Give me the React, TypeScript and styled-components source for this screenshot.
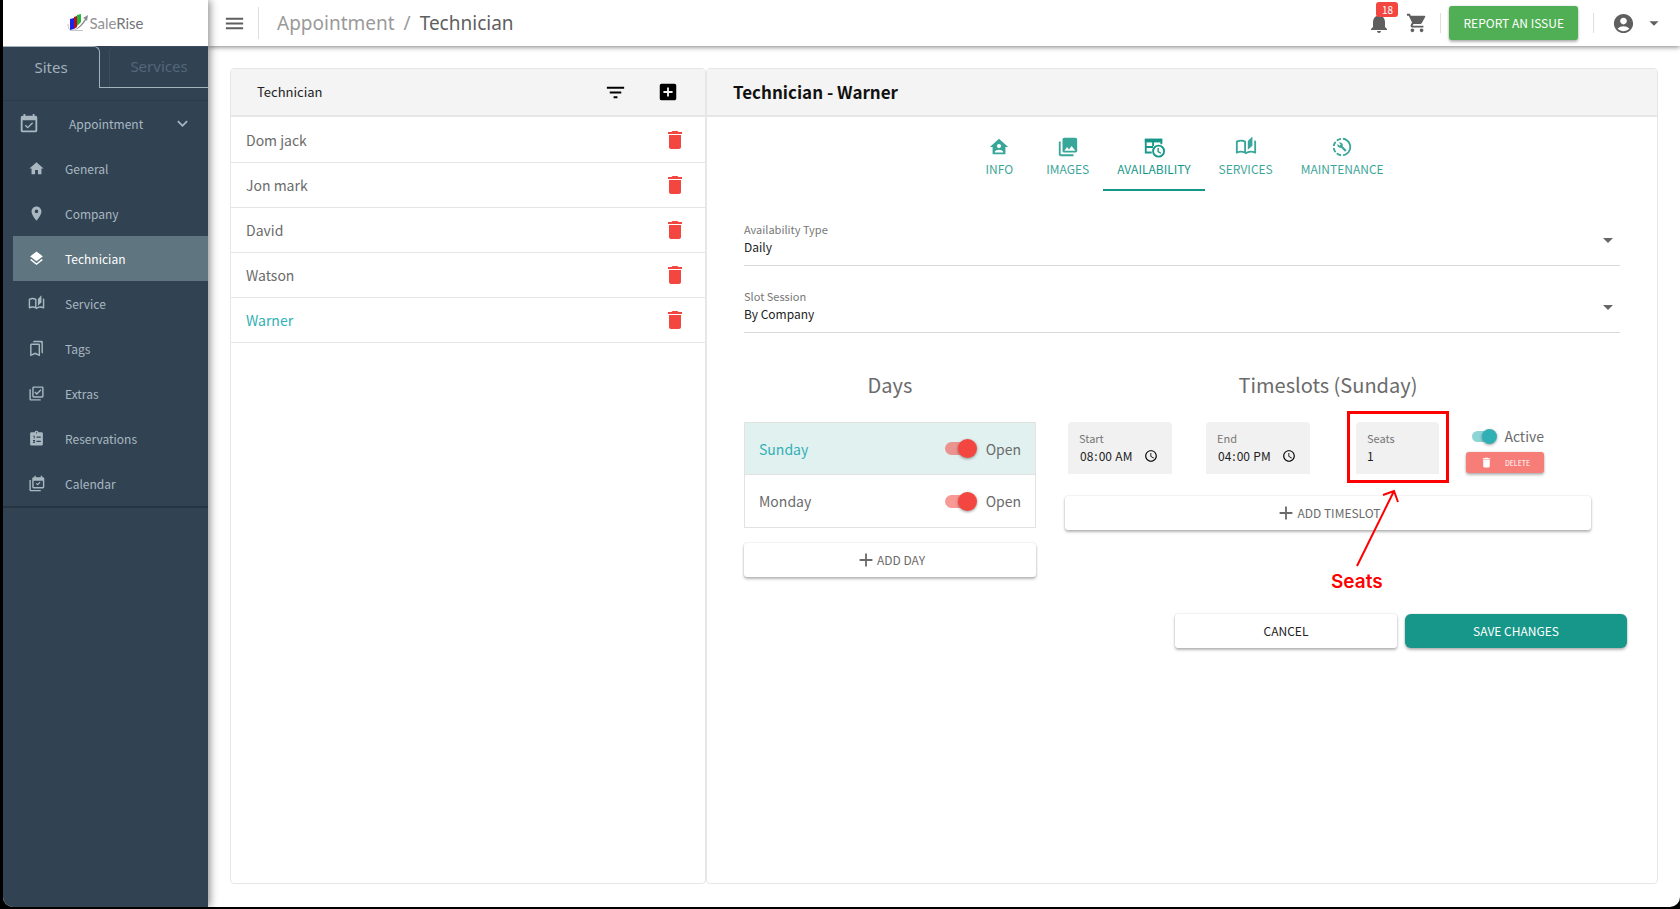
import React, { useState } from "react";
import styled, { createGlobalStyle } from "styled-components";
import {
  MdAccountCircle,
  MdAdd,
  MdAddBox,
  MdArrowDropDown,
  MdDelete,
  MdExpandMore,
  MdFilterList,
  MdHome,
  MdLayers,
  MdMenu,
  MdNotifications,
  MdOutlineAutoStories,
  MdOutlineBookmarks,
  MdOutlineLibraryAddCheck,
  MdPhotoLibrary,
  MdPlace,
  MdShoppingCart,
} from "react-icons/md";

const sans = `"Noto Sans CJK SC", "Noto Sans", sans-serif`;
const display = `"Noto Sans", "Open Sans", sans-serif`;

const color = {
  navy: "#314253",
  navyText: "#a9b8c0",
  navyActive: "#5f7580",
  line: "#e6e6e6",
  grey: "#6b6b6b",
  teal: "#179789",
  aqua: "#30b0b5",
  red: "#f44640",
  green: "#50af55",
};

const raised = "0 2px 3px rgba(0,0,0,.28), 0 0 2px rgba(0,0,0,.16)";

const GlobalStyle = createGlobalStyle`
  *, *::before, *::after { box-sizing: border-box; }
  body { margin: 0; background: #000; font-family: ${sans}; font-size: 12px; line-height: 20px; color: #222; }
  button, input, select { font: inherit; color: inherit; margin: 0; }
  button { cursor: pointer; border: 0; padding: 0; background: none; }
  a { color: inherit; text-decoration: none; }
  ul { list-style: none; margin: 0; padding: 0; }
  h1, h2, h3 { margin: 0; font-weight: 400; }
  svg { display: block; flex: none; }
`;

/* ---------- icons ---------- */

type IconProps = { size?: number };

const pathIcon = (d: string) => ({ size = 24 }: IconProps) => (
  <svg width={size} height={size} viewBox="0 0 24 24" fill="currentColor" aria-hidden="true">
    <path fillRule="evenodd" d={d} />
  </svg>
);

const CalendarCheckIcon = pathIcon(
  "M19 3h-1V1h-2v2H8V1H6v2H5a2 2 0 0 0-2 2v14a2 2 0 0 0 2 2h14a2 2 0 0 0 2-2V5a2 2 0 0 0-2-2zm0 16H5V8h14zM16.53 11.06 15.47 10l-4.88 4.88-2.12-2.12-1.06 1.06L10.59 17z"
);
const HomeAccountIcon = pathIcon(
  "M12 3 2 12h3v8h14v-8h3zM12 8.75A2.25 2.25 0 1 1 12 13.25 2.25 2.25 0 0 1 12 8.75zM12 15c1.5 0 4.5.75 4.5 2.25V18h-9v-.75C7.5 15.75 10.5 15 12 15z"
);
const ProgressWrenchIcon = pathIcon(
  "M13 2.03v2.02c4.39.54 7.5 4.53 6.96 8.92-.46 3.64-3.32 6.53-6.96 6.96v2c5.5-.55 9.5-5.43 8.95-10.93C21.5 6.25 17.73 2.5 13 2.03zM11 2.06C9.05 2.25 7.19 3 5.67 4.26L7.1 5.74C8.22 4.84 9.57 4.26 11 4.06zM4.26 5.67A9.8 9.8 0 0 0 2.05 11h2c.19-1.42.75-2.77 1.64-3.9zM2.06 13c.2 1.96.97 3.81 2.21 5.33l1.42-1.43A8 8 0 0 1 4.06 13zM7.1 18.37l-1.43 1.37A9.9 9.9 0 0 0 11 22v-2a8 8 0 0 1-3.9-1.63zM16.82 15.19l-4.11-4.11c.41-1.04.18-2.26-.68-3.11-.9-.91-2.25-1.09-3.34-.59l1.94 1.94-1.35 1.36-1.99-1.95c-.54 1.09-.29 2.44.59 3.35.86.86 2.08 1.08 3.12.68l4.11 4.1c.18.19.45.19.63 0l1.04-1.03c.22-.18.22-.5.04-.64z"
);
const ClipboardListIcon = pathIcon(
  "M19 3h-4.2a3 3 0 0 0-5.6 0H5a2 2 0 0 0-2 2v15a2 2 0 0 0 2 2h14a2 2 0 0 0 2-2V5a2 2 0 0 0-2-2zM12 3a1 1 0 1 1 0 2 1 1 0 0 1 0-2zM7 8h2.4v4H8.2V9.2H7zM7 14h3v1.6l-1.6 1.6H10v1.2H7v-1.2l1.6-1.8H7zM12 9h6v2h-6zM12 15h6v2h-6z"
);
const CalendarStackIcon = pathIcon(
  "M21 3h-1V1h-2v2h-7V1H9v2H8a2 2 0 0 0-2 2v12a2 2 0 0 0 2 2h13a2 2 0 0 0 2-2V5a2 2 0 0 0-2-2zm0 14H8V8h13zM17.7 10.5l-1.1-1-3 3-1.4-1.3-1.1 1 2.5 2.5zM2 7v14a2 2 0 0 0 2 2h14v-2H4V7z"
);

const TableClockIcon = ({ size = 24 }: IconProps) => (
  <svg width={size} height={size} viewBox="0 0 24 24" fill="none" stroke="currentColor" strokeWidth="2" aria-hidden="true">
    <path d="M9.500 18H3V4h17v5M3 12h8M11 6v5" />
    <path d="M2 3h19v4H2z" fill="currentColor" stroke="none" />
    <circle cx="17" cy="16.5" r="6" />
    <path d="M16.500 13v4l3 1.800" strokeWidth="1.5" />
  </svg>
);

const LogoMark = () => (
  <svg width="22" height="18" viewBox="0 0 22 18" aria-hidden="true">
    <path d="M1 10c0 4 1 6 3 6.500h12" fill="none" stroke="#c4c4c8" strokeWidth="1" />
    <path d="M3 5l4-1v11l-4 1z" fill="#1c22e8" />
    <path d="M7 3l3-1v11l-3 2z" fill="#b3141c" />
    <path d="M10 1l4-1v8l-4 4z" fill="#27b53c" />
    <path d="M7 16c4-2 8-6 11-11l-2-1 5-3-1 6-1-1c-3 5-7 9-12 10z" fill="#8a8a8e" />
  </svg>
);

/* ---------- window frame ---------- */

const Frame = styled.div`
  min-height: 100vh;
  display: flex;
  padding: 0 0 2px 3px;
  background: #000;
`;

const AppWindow = styled.div`
  flex: 1;
  display: grid;
  grid-template-columns: 205px minmax(0, 1fr);
  background: #fff;
  border-radius: 0 0 10px 10px;
  overflow: hidden;
`;

/* ---------- sidebar ---------- */

const Sidebar = styled.aside`
  position: relative;
  z-index: 2;
  display: flex;
  flex-direction: column;
  background: ${color.navy};
  color: ${color.navyText};
  box-shadow: 2px 0 8px rgba(0, 0, 0, 0.45);
`;

const Logo = styled.a`
  height: 46px;
  display: flex;
  align-items: center;
  justify-content: center;
  background: #fff;
  color: #929296;
  font-family: Lato, sans-serif;
  font-size: 15px;

  strong { font-weight: 400; color: #747478; }
`;

const SiteTabs = styled.div`
  height: 42px;
  display: flex;
`;

const SiteTab = styled.button<{ $active?: boolean }>`
  flex: 1;
  padding-bottom: 2px;
  font-family: ${display};
  font-size: 15px;
  color: ${(p) => (p.$active ? "#a3b1ba" : "#53677a")};
  border: 1px solid ${(p) => (p.$active ? "#a3b1ba" : "#3b4e5f")};
  border-width: ${(p) => (p.$active ? "1px 1px 0 0" : "1px 0 0 1px")};
  border-radius: ${(p) => (p.$active ? "0 6px 0 0" : "6px 0 0 0")};
`;

const InactiveTabSlot = styled.div`
  flex: 0 0 108px;
  display: flex;
  padding-left: 9px;
  border-bottom: 1px solid #a3b1ba;
`;

const Nav = styled.nav`
  margin-top: 12px;
  border-top: 1px solid #2c3b4a;
  border-bottom: 2px solid #263442;
`;

const NavGroup = styled.button`
  width: 100%;
  height: 45px;
  display: grid;
  grid-template-columns: 51px 1fr 24px;
  align-items: center;
  padding: 0 12px 0 15px;
  text-align: left;
`;

const NavItem = styled.a<{ $active?: boolean }>`
  height: 45px;
  margin-left: 10px;
  padding-left: 15px;
  display: grid;
  grid-template-columns: 37px 1fr;
  align-items: center;
  color: ${(p) => (p.$active ? "#fff" : color.navyText)};
  background: ${(p) => (p.$active ? color.navyActive : "transparent")};
`;

/* ---------- top bar ---------- */

const Main = styled.div`
  min-width: 0;
  display: flex;
  flex-direction: column;
`;

const TopBar = styled.header`
  position: relative;
  z-index: 1;
  height: 46px;
  display: flex;
  align-items: center;
  padding: 0 15px;
  color: #5f5f5f;
  box-shadow: 0 1px 5px rgba(0, 0, 0, 0.5);
`;

const Rule = styled.span<{ $tall?: boolean }>`
  width: 1px;
  height: ${(p) => (p.$tall ? 32 : 20)}px;
  background: #dedede;
`;

const Crumbs = styled.nav`
  flex: 1;
  display: flex;
  gap: 9px;
  margin-left: 18px;
  font-family: ${display};
  font-size: 19px;
  line-height: 26px;
  color: #9a9a9a;

  span:last-child { color: #5f5f5f; }
`;

const MenuButton = styled.button`
  margin-right: 12px;
`;

const BellButton = styled.button`
  position: relative;
  margin-right: 15px;
`;

const Badge = styled.span`
  position: absolute;
  left: 9px;
  top: -9px;
  width: 22px;
  height: 15px;
  border-radius: 3px;
  background: ${color.red};
  color: #fff;
  font-size: 10px;
  line-height: 15px;
`;

const ReportButton = styled.button`
  height: 34px;
  padding: 0 14px;
  margin: 0 15px 0 8px;
  border-radius: 3px;
  background: ${color.green};
  color: #fff;
  box-shadow: ${raised};
`;

const CartButton = styled.button`
  margin-right: 12px;
`;

const AccountButton = styled.button`
  display: flex;
  align-items: center;
  gap: 8px;
  margin-left: 18px;
`;

/* ---------- panels ---------- */

const Panels = styled.main`
  flex: 1;
  display: grid;
  grid-template-columns: 1fr 2fr;
  padding: 22px 22px 23px;
`;

const Panel = styled.section`
  min-width: 0;
  border: 1px solid ${color.line};
  border-radius: 4px;
`;

const PanelHead = styled.div`
  height: 48px;
  display: flex;
  align-items: center;
  gap: 30px;
  padding: 0 26px;
  background: #f4f4f4;
  border-bottom: 2px solid ${color.line};
`;

const ListTitle = styled.h2`
  flex: 1;
  font-size: 13px;
`;

const DetailTitle = styled.h1`
  font-size: 17px;
  font-weight: 700;
  color: #111;
`;

const HeadButton = styled.button`
  color: #000;
`;

const TechList = styled.ul`
  padding-top: 1px;
`;

const TechRow = styled.li`
  height: 45px;
  display: flex;
  align-items: center;
  justify-content: space-between;
  padding: 0 18px 0 15px;
  border-bottom: 1px solid ${color.line};
`;

const TechName = styled.button<{ $active: boolean }>`
  flex: 1;
  text-align: left;
  font-size: 14px;
  color: ${(p) => (p.$active ? color.aqua : color.grey)};
`;

const TrashButton = styled.button`
  color: ${color.red};
`;

const DetailTabs = styled.div`
  display: flex;
  justify-content: center;
  padding-top: 14px;
`;

const DetailTab = styled.button<{ $active: boolean }>`
  height: 60px;
  min-width: 66px;
  display: flex;
  flex-direction: column;
  align-items: center;
  gap: 1px;
  padding: 5px 14px 0;
  color: ${color.teal};
  opacity: ${(p) => (p.$active ? 1 : 0.85)};
  border-bottom: 2px solid ${(p) => (p.$active ? color.teal : "transparent")};
`;

const Form = styled.form`
  padding: 29px 30px 0 37px;
`;

const SelectField = styled.div`
  position: relative;
  height: 46px;
  display: flex;
  flex-direction: column;
  margin: 0 7px 21px 0;
  border-bottom: 1px solid #d8d8d8;

  svg { position: absolute; right: 0; top: 8px; color: #666; pointer-events: none; }
`;

const FieldLabel = styled.label`
  font-size: 11px;
  line-height: 18px;
  color: #777;
`;

const Select = styled.select`
  appearance: none;
  height: 18px;
  padding: 0;
  border: 0;
  background: transparent;
  line-height: 18px;
  color: #222;
`;

const Schedule = styled.div`
  display: grid;
  grid-template-columns: 292fr 526fr;
  gap: 29px;
  margin: 38px 36px 0 0;
`;

const Heading = styled.h3`
  margin-bottom: 23px;
  text-align: center;
  font-size: 20px;
  line-height: 28px;
  color: ${color.grey};
`;

const DayRow = styled.li<{ $active: boolean }>`
  height: 53px;
  display: flex;
  align-items: center;
  padding: 0 14px;
  font-size: 14px;
  color: ${color.grey};
  border: 1px solid #e2e2e2;
  background: ${(p) => (p.$active ? "#e1f1f0" : "#fff")};

  & + & { border-top: 0; }
`;

const DayName = styled.button<{ $active: boolean }>`
  flex: 1;
  text-align: left;
  color: ${(p) => (p.$active ? color.aqua : "inherit")};
`;

const SwitchLabel = styled.label<{ $gap: number }>`
  display: flex;
  align-items: center;
  gap: ${(p) => p.$gap}px;
  font-size: 14px;
  color: ${color.grey};
`;

const Switch = styled.input<{ $small?: boolean }>`
  appearance: none;
  position: relative;
  width: ${(p) => (p.$small ? 25 : 32)}px;
  height: ${(p) => (p.$small ? 15 : 19)}px;
  color: ${(p) => (p.$small ? color.aqua : color.red)};

  &::before {
    content: "";
    position: absolute;
    inset: ${(p) => (p.$small ? "2px 1px 2px 0" : "3px 1px 3px 0")};
    border-radius: 8px;
    background: currentColor;
    opacity: 0.55;
  }
  &::after {
    content: "";
    position: absolute;
    top: 0;
    left: 0;
    height: 100%;
    aspect-ratio: 1;
    border-radius: 50%;
    background: currentColor;
    box-shadow: 0 1px 3px rgba(0, 0, 0, 0.4);
  }
  &:checked::after { left: auto; right: 0; }
`;

const WideButton = styled.button`
  width: 100%;
  height: 34px;
  display: flex;
  align-items: center;
  justify-content: center;
  border-radius: 3px;
  background: #fff;
  color: ${color.grey};
  box-shadow: ${raised};
`;

const DayList = styled.ul`
  margin-bottom: 15px;
`;

const SlotRow = styled.div`
  display: flex;
  gap: 27px;
  padding: 0 47px 0 3px;
  margin-bottom: 22px;
`;

const SlotFields = styled.div`
  flex: 1;
  display: grid;
  grid-template-columns: 104fr 104fr 95fr;
  gap: 34px;
`;

const SlotField = styled.div`
  position: relative;
  height: 52px;
  display: flex;
  flex-direction: column;
  padding: 7px 11px 0;
  border-radius: 4px 4px 0 0;
  background: #f1f1f1;
`;

const SeatsField = styled(SlotField)`
  margin-left: 12px;
`;

const SlotInput = styled.input`
  width: 100%;
  height: 18px;
  padding: 0;
  border: 0;
  outline: 0;
  background: transparent;
  line-height: 18px;
  color: #222;

  &::-webkit-calendar-picker-indicator { margin: 0 3px 0 0; padding: 0; width: 14px; height: 14px; }
`;

const SlotActions = styled.div`
  flex: 0 0 78px;
  display: flex;
  flex-direction: column;
  align-items: flex-end;
  justify-content: space-between;
  padding: 4px 0 1px;
`;

const DeleteButton = styled.button`
  width: 100%;
  height: 21px;
  display: flex;
  align-items: center;
  justify-content: center;
  gap: 12px;
  border-radius: 3px;
  background: #f67d78;
  color: #fff;
  font-size: 7px;
  box-shadow: ${raised};
`;

const FormActions = styled.div`
  display: flex;
  justify-content: flex-end;
  gap: 8px;
  margin-top: 37px;
`;

const ActionButton = styled.button<{ $primary?: boolean }>`
  width: 222px;
  height: 34px;
  border-radius: ${(p) => (p.$primary ? 6 : 3)}px;
  background: ${(p) => (p.$primary ? color.teal : "#fff")};
  color: ${(p) => (p.$primary ? "#fff" : "#222")};
  box-shadow: ${raised};
`;

/* ---------- callout drawn over the seats field ---------- */

const Callout = styled.div`
  position: absolute;
  inset: -11px -10px -9px -9px;
  border: 3px solid #f00;
  pointer-events: none;
  z-index: 1;
`;

const CalloutArrow = styled.svg`
  position: absolute;
  left: 4px;
  top: 74px;
`;

const CalloutText = styled.span`
  position: absolute;
  left: -19px;
  top: 156px;
  font-family: Inter, sans-serif;
  font-size: 19px;
  font-weight: 600;
  line-height: 24px;
  color: #f00;
`;

/* ---------- data ---------- */

const navItems = [
  { label: "General", icon: <MdHome size={17} /> },
  { label: "Company", icon: <MdPlace size={17} /> },
  { label: "Technician", icon: <MdLayers size={17} /> },
  { label: "Service", icon: <MdOutlineAutoStories size={17} /> },
  { label: "Tags", icon: <MdOutlineBookmarks size={17} /> },
  { label: "Extras", icon: <MdOutlineLibraryAddCheck size={17} /> },
  { label: "Reservations", icon: <ClipboardListIcon size={17} /> },
  { label: "Calendar", icon: <CalendarStackIcon size={17} /> },
];

const technicians = ["Dom jack", "Jon mark", "David", "Watson", "Warner"];

const detailTabs = [
  { label: "INFO", icon: <HomeAccountIcon size={22} /> },
  { label: "IMAGES", icon: <MdPhotoLibrary size={22} /> },
  { label: "AVAILABILITY", icon: <TableClockIcon size={22} /> },
  { label: "SERVICES", icon: <MdOutlineAutoStories size={22} /> },
  { label: "MAINTENANCE", icon: <ProgressWrenchIcon size={22} /> },
];

const days = ["Sunday", "Monday"];

export default function App() {
  const [technician, setTechnician] = useState("Warner");
  const [tab, setTab] = useState("AVAILABILITY");
  const [day, setDay] = useState("Sunday");

  return (
    <>
      <GlobalStyle />
      <Frame>
        <AppWindow>
          <Sidebar>
            <Logo href="#">
              <LogoMark />
              <span>
                Sale<strong>Rise</strong>
              </span>
            </Logo>
            <SiteTabs>
              <SiteTab type="button" $active>
                Sites
              </SiteTab>
              <InactiveTabSlot>
                <SiteTab type="button">Services</SiteTab>
              </InactiveTabSlot>
            </SiteTabs>
            <Nav>
              <NavGroup type="button">
                <CalendarCheckIcon size={22} />
                Appointment
                <MdExpandMore size={21} />
              </NavGroup>
              {navItems.map((item) => (
                <NavItem key={item.label} href="#" $active={item.label === "Technician"}>
                  {item.icon}
                  {item.label}
                </NavItem>
              ))}
            </Nav>
          </Sidebar>

          <Main>
            <TopBar>
              <MenuButton type="button" aria-label="Toggle menu">
                <MdMenu size={23} />
              </MenuButton>
              <Rule $tall />
              <Crumbs>
                <span>Appointment</span>
                <span>/</span>
                <span>Technician</span>
              </Crumbs>
              <BellButton type="button" aria-label="Notifications">
                <MdNotifications size={24} />
                <Badge>18</Badge>
              </BellButton>
              <CartButton type="button" aria-label="Cart">
                <MdShoppingCart size={22} />
              </CartButton>
              <Rule />
              <ReportButton type="button">REPORT AN ISSUE</ReportButton>
              <Rule />
              <AccountButton type="button" aria-label="Account">
                <MdAccountCircle size={23} />
                <MdArrowDropDown size={22} />
              </AccountButton>
            </TopBar>

            <Panels>
              <Panel>
                <PanelHead>
                  <ListTitle>Technician</ListTitle>
                  <HeadButton type="button" aria-label="Filter">
                    <MdFilterList size={23} />
                  </HeadButton>
                  <HeadButton type="button" aria-label="Add technician">
                    <MdAddBox size={22} />
                  </HeadButton>
                </PanelHead>
                <TechList>
                  {technicians.map((name) => (
                    <TechRow key={name}>
                      <TechName type="button" $active={name === technician} onClick={() => setTechnician(name)}>
                        {name}
                      </TechName>
                      <TrashButton type="button" aria-label={`Delete ${name}`}>
                        <MdDelete size={24} />
                      </TrashButton>
                    </TechRow>
                  ))}
                </TechList>
              </Panel>

              <Panel>
                <PanelHead>
                  <DetailTitle>Technician - {technician}</DetailTitle>
                </PanelHead>
                <DetailTabs>
                  {detailTabs.map((t) => (
                    <DetailTab key={t.label} type="button" $active={t.label === tab} onClick={() => setTab(t.label)}>
                      {t.icon}
                      {t.label}
                    </DetailTab>
                  ))}
                </DetailTabs>
                <Form onSubmit={(e) => e.preventDefault()}>
                  <SelectField>
                    <FieldLabel htmlFor="availability">Availability Type</FieldLabel>
                    <Select id="availability">
                      <option>Daily</option>
                    </Select>
                    <MdArrowDropDown size={24} />
                  </SelectField>
                  <SelectField>
                    <FieldLabel htmlFor="session">Slot Session</FieldLabel>
                    <Select id="session">
                      <option>By Company</option>
                    </Select>
                    <MdArrowDropDown size={24} />
                  </SelectField>

                  <Schedule>
                    <div>
                      <Heading>Days</Heading>
                      <DayList>
                        {days.map((name) => (
                          <DayRow key={name} $active={name === day}>
                            <DayName type="button" $active={name === day} onClick={() => setDay(name)}>
                              {name}
                            </DayName>
                            <SwitchLabel $gap={9}>
                              <Switch type="checkbox" defaultChecked />
                              Open
                            </SwitchLabel>
                          </DayRow>
                        ))}
                      </DayList>
                      <WideButton type="button">
                        <MdAdd size={22} />
                        ADD DAY
                      </WideButton>
                    </div>
                    <div>
                      <Heading>Timeslots ({day})</Heading>
                      <SlotRow>
                        <SlotFields>
                          <SlotField>
                            <FieldLabel htmlFor="start">Start</FieldLabel>
                            <SlotInput id="start" type="time" defaultValue="08:00" />
                          </SlotField>
                          <SlotField>
                            <FieldLabel htmlFor="end">End</FieldLabel>
                            <SlotInput id="end" type="time" defaultValue="16:00" />
                          </SlotField>
                          <SeatsField>
                            <FieldLabel htmlFor="seats">Seats</FieldLabel>
                            <SlotInput id="seats" type="text" inputMode="numeric" defaultValue="1" />
                            <Callout>
                              <CalloutArrow width="48" height="82" viewBox="0 0 48 82" fill="none" stroke="#f00" strokeWidth="2">
                                <path d="M3 78 40 3M29 7l11-4 4 11" />
                              </CalloutArrow>
                              <CalloutText>Seats</CalloutText>
                            </Callout>
                          </SeatsField>
                        </SlotFields>
                        <SlotActions>
                          <SwitchLabel $gap={7}>
                            <Switch type="checkbox" $small defaultChecked />
                            Active
                          </SwitchLabel>
                          <DeleteButton type="button">
                            <MdDelete size={13} />
                            DELETE
                          </DeleteButton>
                        </SlotActions>
                      </SlotRow>
                      <WideButton type="button">
                        <MdAdd size={22} />
                        ADD TIMESLOT
                      </WideButton>
                    </div>
                  </Schedule>

                  <FormActions>
                    <ActionButton type="button">CANCEL</ActionButton>
                    <ActionButton type="submit" $primary>
                      SAVE CHANGES
                    </ActionButton>
                  </FormActions>
                </Form>
              </Panel>
            </Panels>
          </Main>
        </AppWindow>
      </Frame>
    </>
  );
}
